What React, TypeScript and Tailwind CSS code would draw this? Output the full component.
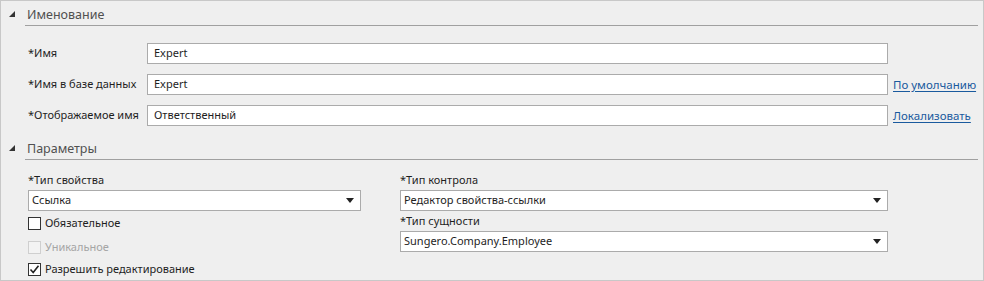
const font = { fontFamily: '"Segoe UI", "Noto Sans", "Open Sans", sans-serif' };

function SectionHeader({ title }: { title: string }) {
  return (
    <div className="flex items-end h-[25px] pl-[8px] pr-[5px]">
      <svg width="6" height="6" viewBox="0 0 6 6" className="mb-[9px] mr-[10px] shrink-0">
        <polygon points="6,0 6,6 0,6" fill="#333" />
      </svg>
      <div className="flex-1 border-b border-[#a0a0a0] pl-[2px] pb-[1px] text-[12.5px] leading-[18px] text-[#505050]">
        {title}
      </div>
    </div>
  );
}

function TextRow({ label, value, link }: { label: string; value: string; link?: string }) {
  return (
    <div className="flex items-center h-[21px] pl-[27px]">
      <div className="w-[119px] shrink-0 text-[11px] text-[#1e1e1e] whitespace-nowrap">{label}</div>
      <div className="w-[741px] h-[21px] shrink-0 bg-white border border-[#ababab] flex items-center px-[6px] text-[11px] text-[#1e1e1e]">
        {value}
      </div>
      {link && (
        <a className="ml-[5px] text-[11.5px] text-[#1a5a9e] underline underline-offset-2 cursor-pointer whitespace-nowrap">
          {link}
        </a>
      )}
    </div>
  );
}

function Select({ value, width }: { value: string; width: string }) {
  return (
    <div className={`${width} h-[21px] bg-white border border-[#ababab] flex items-center justify-between pl-[3px] pr-[6px] text-[11px] text-[#1e1e1e]`}>
      <span>{value}</span>
      <svg width="8" height="5" viewBox="0 0 8 5">
        <polygon points="0,0 8,0 4,5" fill="#222" />
      </svg>
    </div>
  );
}

function Check({ label, checked, disabled }: { label: string; checked?: boolean; disabled?: boolean }) {
  return (
    <div className="flex items-center h-[22px] gap-[4px]">
      <div
        className={`w-[13px] h-[13px] border flex items-center justify-center ${
          disabled ? "border-[#cfcfcf] bg-[#f3f3f3]" : "border-[#333] bg-white"
        }`}
      >
        {checked && (
          <svg width="11" height="11" viewBox="0 0 11 11">
            <path d="M1.5 5.5 L4.2 8.5 L9.5 1.8" fill="none" stroke="#222" strokeWidth="1.6" />
          </svg>
        )}
      </div>
      <span className={`text-[11px] ${disabled ? "text-[#a5a5a5]" : "text-[#1e1e1e]"}`}>{label}</span>
    </div>
  );
}

export default function App() {
  return (
    <div
      className="w-[984px] h-[281px] bg-[#efefef] border border-[#c8c8c8] overflow-hidden"
      style={font}
    >
      <SectionHeader title="Именование" />
      <div className="flex flex-col gap-[10px] pt-[17px]">
        <TextRow label="*Имя" value="Expert" />
        <TextRow label="*Имя в базе данных" value="Expert" link="По умолчанию" />
        <TextRow label="*Отображаемое имя" value="Ответственный" link="Локализовать" />
      </div>
      <div className="pt-[9px]">
        <SectionHeader title="Параметры" />
      </div>
      <div className="flex pl-[27px] pt-[10px]">
        <div className="w-[372px] shrink-0">
          <div className="text-[11px] text-[#1e1e1e] leading-[20px] h-[20px]">*Тип свойства</div>
          <Select value="Ссылка" width="w-[333px]" />
          <div className="pt-[1px]">
            <div className="pb-[2px]">
              <Check label="Обязательное" />
            </div>
            <Check label="Уникальное" disabled />
            <Check label="Разрешить редактирование" checked />
          </div>
        </div>
        <div className="w-[488px] shrink-0">
          <div className="text-[11px] text-[#1e1e1e] leading-[20px] h-[20px]">*Тип контрола</div>
          <Select value="Редактор свойства-ссылки" width="w-[488px]" />
          <div className="text-[11px] text-[#1e1e1e] leading-[20px] h-[20px]">*Тип сущности</div>
          <Select value="Sungero.Company.Employee" width="w-[488px]" />
        </div>
      </div>
    </div>
  );
}
